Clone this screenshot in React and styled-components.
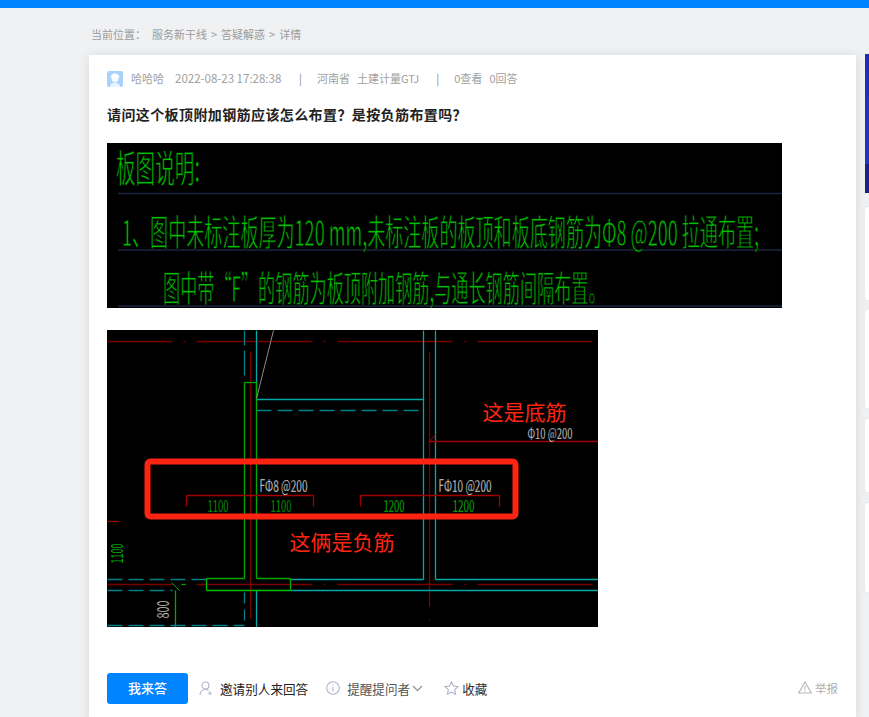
import React from "react";
import styled, { createGlobalStyle } from "styled-components";

const Global = createGlobalStyle`
  html, body { margin: 0; padding: 0; height: 717px; overflow: hidden; background: #f0f1f3; }
  body { font-family: "Noto Sans CJK SC", "Liberation Sans", sans-serif; }
`;

const Page = styled.div`
  height: 717px;
  overflow: hidden;
`;
const TopBar = styled.div`
  height: 8px;
  background: #0084ff;
`;
const Breadcrumb = styled.div`
  box-sizing: border-box;
  display: flex;
  align-items: center;
  height: 47px;
  padding: 4px 0 0 91px;
  font-size: 11px;
  line-height: 16px;
  color: #9b9b9b;
  white-space: pre;
`;
const Body = styled.div`
  display: flex;
  align-items: flex-start;
  padding-left: 89px;
`;
const Card = styled.main`
  flex: none;
  width: 767px;
  height: 670px;
  box-sizing: border-box;
  padding: 16px 18px 0;
  background: #fff;
  box-shadow: 0 0 10px rgba(0, 0, 0, 0.1);
`;
const Meta = styled.div`
  display: flex;
  align-items: flex-start;
  height: 16px;
  font-size: 11px;
  line-height: 14px;
  color: #a0a0a0;
  white-space: pre;
`;
const Author = styled.span`
  margin-left: 8px;
  width: 45px;
`;
const Stamp = styled.span`
  margin-left: -1px;
  width: 124px;
  font-size: 11.5px;
`;
const Divider = styled.span`
  width: 18px;
  color: #8a8a8a;
`;
const Gap = styled.span`
  width: ${(p) => p.$w}px;
  display: inline-block;
`;
const Title = styled.h1`
  margin: 17px 0 0;
  font-size: 14px;
  line-height: 20px;
  font-weight: 700;
  letter-spacing: 0.4px;
  color: #222;
`;
const Sheet = styled.svg`
  display: block;
  background: #000;
  margin-top: ${(p) => p.$top}px;
`;
const CadLabel = styled.text`
  font-family: "Noto Sans CJK SC", sans-serif;
  font-size: ${(p) => p.$size}px;
  fill: ${(p) => p.$fill};
  ${(p) =>
    p.$thin
      ? `stroke: #000; stroke-width: ${p.$thin}px; paint-order: fill stroke;`
      : ""}
`;
const CadLine = styled.line`
  stroke-width: 1.3;
`;
const Actions = styled.div`
  display: flex;
  align-items: center;
  margin-top: 46px;
  height: 31px;
  font-size: 12.6px;
  white-space: pre;
`;
const Answer = styled.button`
  box-sizing: border-box;
  width: 81px;
  height: 31px;
  border: 0;
  padding: 0 0 2px;
  border-radius: 3px;
  background: #0084ff;
  color: #fff;
  font: 500 13px "Noto Sans CJK SC", sans-serif;
  margin-right: 11px;
`;
const Action = styled.span`
  display: inline-flex;
  align-items: center;
  gap: ${(p) => p.$gap}px;
  margin-right: ${(p) => p.$mr || 0}px;
  padding-bottom: 1px;
  color: ${(p) => p.$color || "#222"};
`;
const Pick = styled.span`
  display: inline-flex;
  align-items: center;
  gap: 2px;
`;
const Report = styled.span`
  margin-left: auto;
  display: inline-flex;
  align-items: center;
  gap: 3px;
  padding-bottom: 2px;
  font-size: 11.5px;
  color: #aeaeae;
`;
const Aside = styled.aside`
  margin-left: 9px;
  width: 200px;
  flex: none;
  display: flex;
  flex-direction: column;
  margin-top: -1px;
`;
const Banner = styled.div`
  height: 139px;
  margin-bottom: 14px;
  background: linear-gradient(180deg, #1e2fb6 0%, #2236bd 79%, #1a2480 79%, #1a2480 100%);
`;
const SideCard = styled.div`
  height: ${(p) => p.$h}px;
  margin-bottom: ${(p) => p.$mb}px;
  background: #fff;
  border-radius: 3px;
  box-shadow: 0 0 6px rgba(0, 0, 0, 0.04);
`;

const CAD_GREEN = "#00a800";
const TEAL = "#00a8a8";
const DIM_TEAL = "#007f85";
const DARK_RED = "#7a0000";
const RED = "#a00000";

const segs = [
  [107, 341, 172, 341, DARK_RED], [183, 341, 185, 341, DARK_RED], [196, 341, 312, 341, DARK_RED],
  [323, 341, 325, 341, DARK_RED], [337, 341, 452, 341, DARK_RED], [464, 341, 466, 341, DARK_RED],
  [477, 341, 592, 341, DARK_RED],
  [107, 584, 172, 584, DARK_RED], [183, 584, 185, 584, DARK_RED], [196, 584, 312, 584, DARK_RED],
  [323, 584, 325, 584, DARK_RED], [337, 584, 452, 584, DARK_RED], [464, 584, 466, 584, DARK_RED],
  [477, 584, 592, 584, DARK_RED],
  [250, 351, 250, 618, DARK_RED],
  [429, 351, 429, 606, DARK_RED], [429, 619, 429, 620, DARK_RED],
  [250, 338, 250, 339, DARK_RED], [429, 338, 429, 339, DARK_RED],
  [107, 521, 119, 521, RED],
  [256, 330, 256, 399, TEAL], [256, 399, 423, 399, TEAL], [423, 330, 423, 579, TEAL],
  [435, 330, 435, 579, TEAL], [290, 579, 423, 579, TEAL], [435, 579, 598, 579, TEAL],
  [290, 590, 598, 590, TEAL], [256, 590, 256, 627, TEAL],
  [244, 382, 244, 578, CAD_GREEN], [244, 382, 256, 382, CAD_GREEN], [256, 382, 256, 578, CAD_GREEN],
  [256, 578, 290, 578, CAD_GREEN], [290, 578, 290, 590, CAD_GREEN], [206, 590, 290, 590, "#00c000"],
  [206, 578, 206, 590, "#00c000"], [206, 578, 244, 578, CAD_GREEN],
  [175, 590, 175, 627, CAD_GREEN], [181, 584, 185, 584, CAD_GREEN],
  [429, 441, 598, 441, RED],
  [186, 495, 313, 495, RED], [186, 495, 186, 506, RED], [313, 495, 313, 506, RED],
  [360, 495, 499, 495, RED], [360, 495, 360, 506, RED], [499, 495, 499, 506, RED],
];

const strokes = [
  [273, 330, 256, 398, "#8a8a8a"],
  [171, 582, 179, 590, CAD_GREEN],
  [429, 441, 435, 434, RED],
];

const dashes = [
  [244, 330, 244, 376, DIM_TEAL, "15 5 25 5"],
  [244, 592, 244, 625, DIM_TEAL, "11 6"],
  [256, 410, 423, 410, DIM_TEAL, "15 6"],
  [107, 579, 206, 579, DIM_TEAL, "15 6"],
  [107, 590, 172, 590, DIM_TEAL, "15 6"],
  [107, 625, 244, 625, DIM_TEAL, "15 6"],
];

const NoteSheet = () => (
  <Sheet $top={19} width="675" height="165" viewBox="107 143 675 165">
    {[193.5, 250, 306].map((y) => (
      <line key={y} x1="118" x2="782" y1={y} y2={y} stroke="#1c2442" strokeWidth="1.5" />
    ))}
    <CadLabel $size={38} $fill="#00c000" $thin={0.8} transform="translate(116 182) scale(.516 1)">
      板图说明:
    </CadLabel>
    <CadLabel $size={36} $fill="#00c000" $thin={0.8} transform="translate(122 246) scale(.502 1)">
      1、图中未标注板厚为120 mm,未标注板的板顶和板底钢筋为Φ8 @200 拉通布置;
    </CadLabel>
    <CadLabel $size={36} $fill="#00c000" $thin={0.8} transform="translate(163 302) scale(.476 1)">
      图中带“F”的钢筋为板顶附加钢筋,与通长钢筋间隔布置。
    </CadLabel>
  </Sheet>
);

const small = [
  ["FΦ8 @200", 259, 491, 48, "#e8e8e8", 17],
  ["FΦ10 @200", 438, 491, 53, "#e8e8e8", 17],
  ["Φ10 @200", 527, 438, 45, "#e8e8e8", 15],
  ["1100", 207, 511, 21, "#00b000", 17],
  ["1100", 270, 511, 21, "#00b000", 17],
  ["1200", 383, 511, 21, "#00d000", 17],
  ["1200", 452, 511, 22, "#00d000", 17],
];

const PlanSheet = () => (
  <Sheet $top={22} width="491" height="297" viewBox="106.5 329.5 491 297">
    {segs.map(([x1, y1, x2, y2, c], i) => (
      <CadLine key={i} x1={x1} y1={y1} x2={x2} y2={y2} stroke={c} />
    ))}
    {strokes.map(([x1, y1, x2, y2, c], i) => (
      <line key={i} x1={x1} y1={y1} x2={x2} y2={y2} stroke={c} />
    ))}
    {dashes.map(([x1, y1, x2, y2, c, d], i) => (
      <CadLine key={i} x1={x1} y1={y1} x2={x2} y2={y2} stroke={c} strokeDasharray={d} />
    ))}
    <rect x="147" y="461" width="368" height="55" rx="3" fill="none" stroke="#ff2412" strokeWidth="6" />
    {small.map(([t, x, y, w, c, s], i) => (
      <CadLabel key={i} $size={s} $fill={c} $thin={0.3} x={x} y={y} textLength={w} lengthAdjust="spacingAndGlyphs">
        {t}
      </CadLabel>
    ))}
    <CadLabel $size={17} $fill="#00a800" transform="rotate(-90 122 563)" x="122" y="563" textLength="20" lengthAdjust="spacingAndGlyphs">
      1100
    </CadLabel>
    <CadLabel $size={16} $fill="#d8d8d8" $thin={0.3} transform="rotate(-90 168 618)" x="168" y="618" textLength="18" lengthAdjust="spacingAndGlyphs">
      800
    </CadLabel>
    <CadLabel $size={21} $fill="#ff2412" x="482" y="419">这是底筋</CadLabel>
    <CadLabel $size={21} $fill="#ff2412" x="289" y="549">这俩是负筋</CadLabel>
  </Sheet>
);

const Avatar = () => (
  <svg width="16" height="16" viewBox="0 0 16 16">
    <rect width="16" height="16" rx="2" fill="#a9d2fb" />
    <path d="M3 16c0-3 2.500-4.500 5-4.500s5 1.500 5 4.500z" fill="#e8f3fe" />
    <circle cx="8" cy="7.500" r="3.500" fill="#f4f9ff" />
    <path d="M3.500 6.500C3.800 3.800 5.800 2.500 8 2.500s4.200 1.300 4.500 4z" fill="#fff" />
  </svg>
);

const IconLine = styled.svg`
  flex: none;
  fill: none;
  stroke: ${(p) => p.$c || "#abb3c8"};
  stroke-width: 1.1;
`;

const InviteIcon = () => (
  <IconLine width="14" height="15" viewBox="0 0 14 15">
    <circle cx="6.500" cy="4.500" r="3.500" />
    <path d="M1 14c0-3.500 2.500-5.500 5.500-5.500 1.200 0 2.300.3 3.200.9" />
    <path d="M11 10.500v3.500M9.300 12.200h3.500" />
  </IconLine>
);
const InfoIcon = () => (
  <IconLine width="14" height="14" viewBox="0 0 14 14">
    <circle cx="7" cy="7" r="6.300" />
    <path d="M7 5.800v4.800M7 3.400v1.200" />
  </IconLine>
);
const Chevron = () => (
  <IconLine $c="#9a9a9a" width="11" height="7" viewBox="0 0 11 7">
    <path d="M1 1l4.500 4.500L10 1" strokeWidth="1.400" />
  </IconLine>
);
const StarIcon = () => (
  <IconLine width="15" height="14" viewBox="0 0 15 14">
    <path d="M7.500 1l2 4 4.500.6-3.300 3.100.8 4.500-4-2.100-4 2.100.8-4.500L1 5.600 5.500 5z" />
  </IconLine>
);
const WarnIcon = () => (
  <IconLine $c="#b5b5b5" width="14" height="13" viewBox="0 0 14 13">
    <path d="M7 1L13.300 12H.7z" />
    <path d="M7 4.800v3.800M7 9.500v1.100" />
  </IconLine>
);

export default function App() {
  return (
    <Page>
      <Global />
      <TopBar />
      <Breadcrumb>
        {"当前位置\uFF1A"}<Gap $w={6} />服务新干线<Gap $w={4} />&gt;<Gap $w={4} />答疑解惑<Gap $w={4} />&gt;<Gap $w={4} />详情
      </Breadcrumb>
      <Body>
        <Card>
          <Meta>
            <Avatar />
            <Author>哈哈哈</Author>
            <Stamp>2022-08-23 17:28:38</Stamp>
            <Divider>|</Divider>
            河南省<Gap $w={7} />土建计量GTJ<Gap $w={17} />
            <Divider>|</Divider>
            0查看<Gap $w={7} />0回答
          </Meta>
          <Title>{"请问这个板顶附加钢筋应该怎么布置\uFF1F是按负筋布置吗\uFF1F"}</Title>
          <NoteSheet />
          <PlanSheet />
          <Actions>
            <Answer>我来答</Answer>
            <Action $gap={7} $mr={18}><InviteIcon />邀请别人来回答</Action>
            <Action $gap={7} $mr={21} $color="#555"><InfoIcon /><Pick>提醒提问者<Chevron /></Pick></Action>
            <Action $gap={3} $color="#333"><StarIcon />收藏</Action>
            <Report><WarnIcon />举报</Report>
          </Actions>
        </Card>
        <Aside>
          <Banner />
          <SideCard $h={93} $mb={10} />
          <SideCard $h={98} $mb={11} />
          <SideCard $h={73} $mb={11} />
          <SideCard $h={89} $mb={0} />
        </Aside>
      </Body>
    </Page>
  );
}
